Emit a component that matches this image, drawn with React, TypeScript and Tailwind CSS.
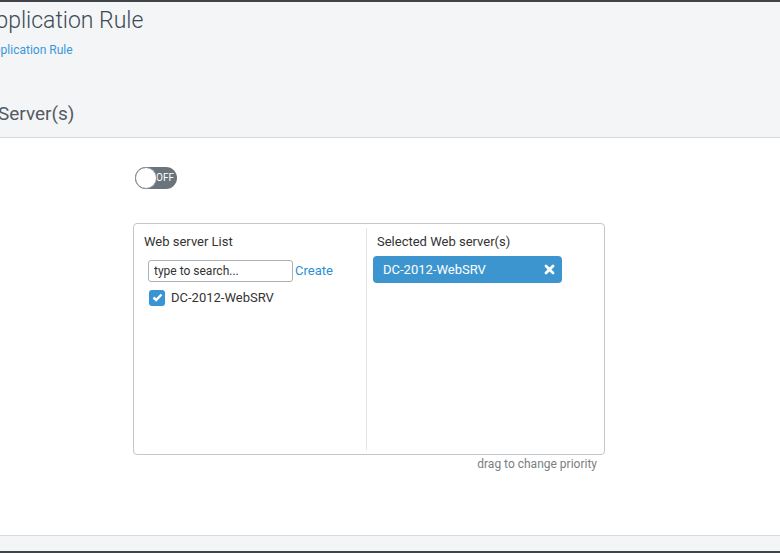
import React from "react";

const App = () => {
  return (
    <div className="w-[780px] h-[553px] overflow-hidden bg-white flex flex-col font-['Roboto',sans-serif] border-t-2 border-b-2 border-[#404448]">
      <div className="bg-[#f4f5f7] border-b border-[#d7dadd] h-[136px] shrink-0 overflow-hidden">
        <h1 className="text-[23px] font-light text-[#3e4b56] leading-none mt-[7px] ml-[-19px] whitespace-nowrap">Application Rule</h1>
        <div className="text-[12px] text-[#3a98d8] mt-[9px] ml-[-14px] whitespace-nowrap">Application Rule</div>
        <h2 className="text-[19px] text-[#555b61] mt-[41px] ml-[-2px] whitespace-nowrap">Server(s)</h2>
      </div>

      <div className="flex-1 pl-[133px] pt-[29px]">
        <div className="ml-[2px] w-[42px] h-[22px] rounded-full bg-[#6b737b] relative flex items-center">
          <div className="absolute left-0 top-0 w-[22px] h-[22px] rounded-full bg-white border border-[#8a9097]" />
          <span className="ml-[21px] text-[10px] text-white leading-none">OFF</span>
        </div>

        <div className="mt-[34px] w-[472px] h-[232px] border border-[#c3c7cb] rounded-[4px] flex p-[4px]">
          <div className="w-[229px] border-r border-[#e3e5e7] pl-[6px] pt-[7px]">
            <div className="text-[13px] text-[#333] leading-none">Web server List</div>
            <div className="flex items-center mt-[12px] ml-[4px]">
              <input
                readOnly
                value="type to search..."
                className="w-[145px] h-[22px] border border-[#aab0b5] rounded-[3px] px-[5px] text-[12px] text-[#333] outline-none"
              />
              <span className="ml-[2px] text-[13px] text-[#2d8fd5]">Create</span>
            </div>
            <div className="flex items-center mt-[6px] ml-[5px]">
              <div className="w-[16px] h-[16px] rounded-[3px] bg-[#3994d6] flex items-center justify-center">
                <svg width="11" height="9" viewBox="0 0 11 9">
                  <path d="M1.5 4.5 L4.2 7 L9.5 1.5" stroke="white" strokeWidth="2.4" fill="none" />
                </svg>
              </div>
              <span className="ml-[6px] text-[13px] text-[#333]">DC-2012-WebSRV</span>
            </div>
          </div>
          <div className="flex-1 pl-[6px] pt-[7px]">
            <div className="ml-[4px] text-[13px] text-[#333] leading-none">Selected Web server(s)</div>
            <div className="mt-[8px] w-[189px] h-[27px] rounded-[4px] bg-[#3d95cf] flex items-center justify-between pl-[10px] pr-[7px]">
              <span className="text-[13px] text-white">DC-2012-WebSRV</span>
              <svg width="11" height="11" viewBox="0 0 11 11">
                <path d="M2 2 L9 9 M9 2 L2 9" stroke="white" strokeWidth="2.8" strokeLinecap="round" />
              </svg>
            </div>
          </div>
        </div>
        <div className="w-[464px] text-right text-[12px] text-[#7a7f84] leading-[16px] mt-[1px]">drag to change priority</div>
      </div>

      <div className="h-[16px] shrink-0 bg-[#f4f5f7] border-t border-[#d7dadd]" />
    </div>
  );
};

export default App;
